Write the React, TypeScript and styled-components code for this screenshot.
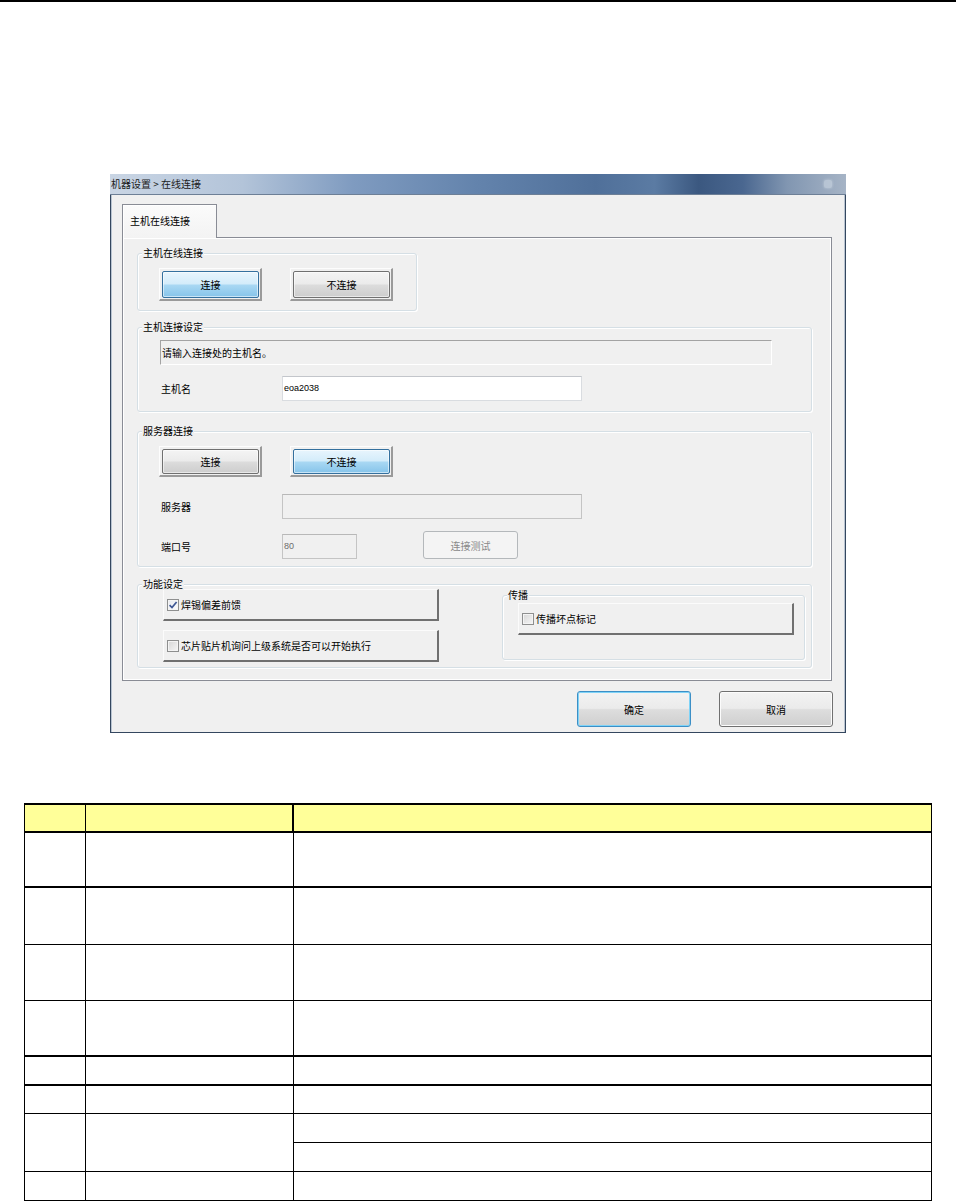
import React from 'react';
import styled, { createGlobalStyle } from 'styled-components';

const GlobalStyle = createGlobalStyle`
  html, body {
    margin: 0;
    padding: 0;
    background: #fff;
  }
  body {
    font-family: "Noto Sans CJK SC", "Liberation Sans", sans-serif;
    color: #000;
  }
  * {
    box-sizing: border-box;
  }
`;

// table rows below the screenshot: bottom border width of each row
const plainRows = [2, 1, 1, 2, 2, 1];

const App: React.FC = () => {
  return (
    <Page>
      <GlobalStyle />
      <TopRule />

      <Window>
        <TitleBar>
          <span>机器设置 &gt; 在线连接</span>
          <CloseGlow />
        </TitleBar>

        <WindowBody>
          <TabStrip>
            <Tab>主机在线连接</Tab>
          </TabStrip>

          <TabPanel>
            <GroupBox $w={280} $h={58} $pad="14px 0 0 21px">
              <Legend>主机在线连接</Legend>
              <ButtonRow>
                <ToggleFrame $h={33}>
                  <ToggleFace $on>连接</ToggleFace>
                </ToggleFrame>
                <ToggleFrame $h={33}>
                  <ToggleFace>不连接</ToggleFace>
                </ToggleFrame>
              </ButtonRow>
            </GroupBox>

            <GroupBox $h={85} $mt={16} $pad="12px 0 0 21px">
              <Legend>主机连接设定</Legend>
              <InfoStrip>请输入连接处的主机名。</InfoStrip>
              <FieldRow $mt={11}>
                <FieldLabel>主机名</FieldLabel>
                <TextBox $w={300}>eoa2038</TextBox>
              </FieldRow>
            </GroupBox>

            <GroupBox $h={136} $mt={19} $pad="14px 0 0 21px">
              <Legend>服务器连接</Legend>
              <ButtonRow>
                <ToggleFrame $h={31}>
                  <ToggleFace>连接</ToggleFace>
                </ToggleFrame>
                <ToggleFrame $h={31}>
                  <ToggleFace $on>不连接</ToggleFace>
                </ToggleFrame>
              </ButtonRow>
              <FieldRow $mt={17}>
                <FieldLabel>服务器</FieldLabel>
                <TextBox $w={300} $disabled />
              </FieldRow>
              <FieldRow $mt={12}>
                <FieldLabel>端口号</FieldLabel>
                <TextBox $w={75} $disabled>80</TextBox>
                <TestButton disabled>连接测试</TestButton>
              </FieldRow>
            </GroupBox>

            <GroupBox $h={84} $mt={17} $pad="4px 0 0 25px">
              <Legend>功能设定</Legend>
              <FeatureRow>
                <CheckColumn>
                  <CheckButton>
                    <CheckBox $checked>
                      <svg width="10" height="10" viewBox="0 0 10 10">
                        <path d="M1.6 5.2 L4 7.6 L8.6 2" fill="none" stroke="#3d5693" strokeWidth="1.7" />
                      </svg>
                    </CheckBox>
                    焊锡偏差前馈
                  </CheckButton>
                  <CheckButton>
                    <CheckBox />
                    芯片贴片机询问上级系统是否可以开始执行
                  </CheckButton>
                </CheckColumn>

                <GroupBox $w={303} $h={65} $ml={63} $mt={6} $pad="7px 0 0 15px">
                  <Legend>传播</Legend>
                  <CheckButton>
                    <CheckBox />
                    传播坏点标记
                  </CheckButton>
                </GroupBox>
              </FeatureRow>
            </GroupBox>
          </TabPanel>

          <Footer>
            <DialogButton $default>确定</DialogButton>
            <DialogButton>取消</DialogButton>
          </Footer>
        </WindowBody>
      </Window>

      <SpecGrid>
        <Cell $head $b={2} $r={1} />
        <Cell $head $b={2} $r={2} />
        <Cell $head $b={2} $r={1} />

        {plainRows.map((b, i) => (
          <React.Fragment key={i}>
            <Cell $b={b} $r={1} />
            <Cell $b={b} $r={1} />
            <Cell $b={b} $r={1} />
          </React.Fragment>
        ))}

        <Cell $b={1} $r={1} $span={2} />
        <Cell $b={1} $r={1} $span={2} />
        <Cell $b={1} $r={1} />
        <Cell $b={1} $r={1} />

        <Cell $b={1} $r={1} />
        <Cell $b={1} $r={1} />
        <Cell $b={1} $r={1} />
      </SpecGrid>
    </Page>
  );
};

export default App;

const Page = styled.div`
  width: 956px;
`;

const TopRule = styled.div`
  height: 2px;
  background: #000;
`;

const Window = styled.div`
  width: 736px;
  margin: 172px auto 0;
`;

const TitleBar = styled.div`
  height: 21px;
  display: flex;
  align-items: center;
  justify-content: space-between;
  padding: 0 14px 1px 1px;
  font-size: 10px;
  line-height: 12px;
  color: #1b1b1b;
  background: linear-gradient(
    90deg,
    #c9d5e4 0%,
    #b3c4d9 18%,
    #7f9bc0 33%,
    #6383ac 50%,
    #50709a 66%,
    #5b7ba3 74%,
    #3b5880 80%,
    #4a6790 86%,
    #8196b1 92%,
    #a6b4c6 100%
  );
  border-bottom: 1px solid #6d7f96;
`;

const CloseGlow = styled.span`
  width: 8px;
  height: 8px;
  border-radius: 2px;
  background: rgba(220, 228, 238, 0.45);
  box-shadow: 0 0 3px rgba(220, 228, 238, 0.6);
`;

const WindowBody = styled.div`
  height: 538px;
  display: flex;
  flex-direction: column;
  padding: 9px 13px 0 11px;
  background: #f0f0f0;
  border: 1px solid #34475f;
  border-top: none;
  box-shadow: inset 1px 0 0 #b9c4d1, inset -1px 0 0 #b9c4d1;
`;

const TabStrip = styled.div`
  display: flex;
  height: 33px;
`;

const Tab = styled.div`
  position: relative;
  z-index: 1;
  width: 95px;
  height: 34px;
  display: flex;
  align-items: center;
  padding: 0 0 1px 7px;
  font-size: 10px;
  line-height: 12px;
  background: linear-gradient(#fbfbfb, #f3f3f3);
  border: 1px solid #898c95;
  border-bottom: none;
  box-shadow: inset 1px 1px 0 #fff;
`;

const TabPanel = styled.div`
  height: 444px;
  display: flex;
  flex-direction: column;
  padding: 15px 19px 0 14px;
  background: #f0f0f0;
  border: 1px solid #898c95;
  box-shadow: inset 1px 1px 0 #fff, inset -1px -1px 0 #fff;
`;

const GroupBox = styled.div<{ $w?: number; $h: number; $mt?: number; $ml?: number; $pad: string }>`
  position: relative;
  flex-shrink: 0;
  width: ${p => (p.$w ? `${p.$w}px` : 'auto')};
  height: ${p => p.$h}px;
  margin-top: ${p => p.$mt ?? 0}px;
  margin-left: ${p => p.$ml ?? 0}px;
  padding: ${p => p.$pad};
  border: 1px solid #d5dfe5;
  border-radius: 3px;
  box-shadow: inset 1px 1px 0 #fff, 1px 1px 0 #fff;
`;

const Legend = styled.span`
  position: absolute;
  top: -7px;
  left: 4px;
  padding: 0 1px;
  background: #f0f0f0;
  font-size: 10px;
  line-height: 12px;
  white-space: nowrap;
`;

const ButtonRow = styled.div`
  display: flex;
  gap: 28px;
`;

const ToggleFrame = styled.button<{ $h: number }>`
  display: block;
  width: 103px;
  height: ${p => p.$h}px;
  padding: 2px 1px 1px 2px;
  margin: 0;
  border-style: solid;
  border-width: 1px 2px 2px 1px;
  border-color: #fdfdfd #9a9a9a #9a9a9a #fdfdfd;
  background: #f0f0f0;
  font-family: inherit;
  color: #000;
  cursor: default;
`;

const ToggleFace = styled.span<{ $on?: boolean }>`
  display: flex;
  align-items: center;
  justify-content: center;
  height: 100%;
  font-size: 10px;
  line-height: 12px;
  border: 1px solid ${p => (p.$on ? '#34709e' : '#707070')};
  border-radius: 2px;
  background: ${p =>
    p.$on
      ? 'linear-gradient(#e8f5fd 0%, #d3ecfa 48%, #a9d8f3 52%, #86c4ea 100%)'
      : 'linear-gradient(#f4f4f4 0%, #ebebeb 48%, #dcdcdc 52%, #cdcdcd 100%)'};
  box-shadow: inset 0 0 0 1px rgba(255, 255, 255, 0.55);
`;

const InfoStrip = styled.div`
  width: 612px;
  height: 25px;
  margin-left: 1px;
  display: flex;
  align-items: center;
  padding-left: 1px;
  font-size: 10px;
  line-height: 12px;
  border: 1px solid;
  border-color: #a3a3a3 #fff #fff #a3a3a3;
`;

const FieldRow = styled.div<{ $mt: number }>`
  display: flex;
  align-items: flex-end;
  margin-top: ${p => p.$mt}px;
`;

const FieldLabel = styled.span`
  width: 123px;
  padding-left: 2px;
  font-size: 10px;
  line-height: 25px;
`;

const TextBox = styled.div<{ $w: number; $disabled?: boolean }>`
  width: ${p => p.$w}px;
  height: 25px;
  display: flex;
  align-items: center;
  padding: 0 0 1px 1px;
  font-family: "Liberation Sans", sans-serif;
  font-size: 9px;
  color: ${p => (p.$disabled ? '#6d6d6d' : '#000')};
  background: ${p => (p.$disabled ? '#f0f0f0' : '#fff')};
  border: 1px solid ${p => (p.$disabled ? '#c4c4c4' : '#d9dce0')};
  border-top-color: ${p => (p.$disabled ? '#b8b8b8' : '#c3c6cb')};
`;

const TestButton = styled.button`
  width: 95px;
  height: 28px;
  margin: 0 0 0 66px;
  padding: 0;
  font-family: inherit;
  font-size: 10px;
  color: #8a8a8a;
  background: #f4f4f4;
  border: 1px solid #b4b8bb;
  border-radius: 3px;
`;

const FeatureRow = styled.div`
  display: flex;
  align-items: flex-start;
`;

const CheckColumn = styled.div`
  display: flex;
  flex-direction: column;
  gap: 9px;
`;

const CheckButton = styled.div`
  width: 276px;
  height: 32px;
  display: flex;
  align-items: center;
  gap: 2px;
  padding: 0 0 0 3px;
  font-size: 10px;
  line-height: 12px;
  background: #f0f0f0;
  border-style: solid;
  border-width: 1px 2px 2px 1px;
  border-color: #fbfbfb #707070 #707070 #fbfbfb;
`;

const CheckBox = styled.span<{ $checked?: boolean }>`
  width: 12px;
  height: 12px;
  flex-shrink: 0;
  display: flex;
  align-items: center;
  justify-content: center;
  border: 1px solid #8e8f8f;
  background: ${p =>
    p.$checked ? 'linear-gradient(135deg, #e6e9f0, #fbfbfd)' : 'linear-gradient(135deg, #d6d6d6, #f6f6f6)'};
  box-shadow: inset 0 0 0 1px #f4f4f4;
`;

const Footer = styled.div`
  display: flex;
  justify-content: flex-end;
  gap: 28px;
  margin: 10px -1px 0 0;
`;

const DialogButton = styled.button<{ $default?: boolean }>`
  width: 114px;
  height: 36px;
  margin: 0;
  padding: 0;
  font-family: inherit;
  font-size: 10px;
  color: #000;
  border: 1px solid ${p => (p.$default ? '#3c8fc6' : '#707070')};
  border-radius: 3px;
  background: linear-gradient(#f3f3f3 0%, #ebebeb 48%, #dddddd 52%, #cfcfcf 100%);
  box-shadow: ${p => (p.$default ? 'inset 0 0 0 1px #7fd3f7' : 'inset 0 0 0 1px #fcfcfc')};
  cursor: default;
`;

const SpecGrid = styled.div`
  width: 908px;
  margin: 70px auto 0;
  display: grid;
  grid-template-columns: 61px 208px 638px;
  grid-template-rows: 28px 55px 57px 56px 56px 29px 28px 29px 29px 29px;
  border-top: 2px solid #000;
  border-left: 1px solid #000;
`;

const Cell = styled.div<{ $b: number; $r: number; $head?: boolean; $span?: number }>`
  grid-row: ${p => (p.$span ? `span ${p.$span}` : 'auto')};
  background: ${p => (p.$head ? '#ffff99' : '#fff')};
  border-right: ${p => p.$r}px solid #000;
  border-bottom: ${p => p.$b}px solid #000;
`;
